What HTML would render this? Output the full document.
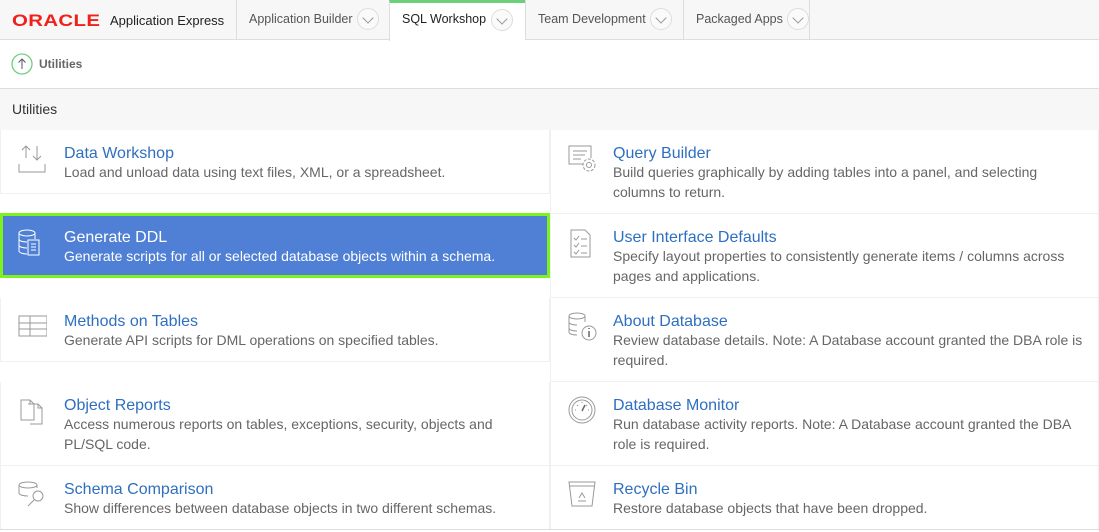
<!DOCTYPE html>
<html><head><meta charset="utf-8"><style>
*{box-sizing:border-box;margin:0;padding:0}
body{width:1099px;height:532px;overflow:hidden;background:#fff;font-family:"Liberation Sans",Arial,sans-serif;position:relative}
.top{position:absolute;left:0;top:0;width:1099px;height:40px;background:#f7f7f7;border-bottom:1px solid #ddd}
.logo{position:absolute;left:12px;top:11px;color:#f0201b;font-weight:bold;font-size:17px;letter-spacing:0.3px;transform:scaleX(1.2);transform-origin:left}
.ae{position:absolute;left:110px;top:13px;font-size:13px;color:#222}
.tab{position:absolute;top:0;height:40px;border-left:1px solid #ddd;font-size:12.5px;color:#555;padding:12px 0 0 12px}
.tab.act{background:#fff;border-top:3px solid #6dcf79;padding-top:9px;color:#222;height:41px}
.chev{position:absolute;top:8px;width:22px;height:22px;border:1px solid #ddd;border-radius:50%;background:#fafafa}
.chev:after{content:"";position:absolute;left:6px;top:5px;width:7px;height:7px;border-right:1px solid #999;border-bottom:1px solid #999;transform:rotate(45deg)}
.bc{position:absolute;top:40px;left:0;width:1099px;height:49px;border-bottom:1px solid #ddd}
.rh{position:absolute;top:89px;left:0;width:1099px;height:41px;background:#f7f7f7;font-size:14px;color:#333;padding:12px 0 0 12px}
.it{position:absolute;border:1px solid #f0f0f0;border-top:none}
.it h{display:block;position:absolute;left:63px;top:15px;font-size:16px;color:#2f6fbf;white-space:nowrap}
.it p{position:absolute;left:63px;top:32px;font-size:14px;line-height:20px;color:#666;width:472px}
.it svg{position:absolute;left:16px;top:14px}
.sel{background:#4f80d5;border:3px solid #7ff21e}
.sel h,.sel p{color:#fff}
.sel h{left:61px;top:13px}.sel p{left:61px;top:30px}.sel svg{left:13px;top:13px}
.r h,.r p{left:62px}
</style></head><body>
<div class="top">
<div class="logo">ORACLE</div><div class="ae">Application Express</div>
<div class="tab" style="left:236px;width:153px">Application Builder<span class="chev" style="left:120px"></span></div>
<div class="tab act" style="left:389px;width:136px">SQL Workshop<span class="chev" style="left:101px;top:6px"></span></div>
<div class="tab" style="left:525px;width:158px">Team Development<span class="chev" style="left:124px"></span></div>
<div class="tab" style="left:683px;width:127px;border-right:1px solid #ddd">Packaged Apps<span class="chev" style="left:103px"></span></div>
</div>
<div class="bc">
<svg style="position:absolute;left:11px;top:13px" width="22" height="22"><circle cx="11" cy="11" r="10" fill="#fff" stroke="#6dcf79" stroke-width="1.3"/><path d="M11 16V6M7.5 9.5L11 6l3.5 3.5" fill="none" stroke="#556" stroke-width="1"/></svg>
<div style="position:absolute;left:39px;top:17px;font-size:12px;font-weight:bold;color:#666">Utilities</div>
</div>
<div class="rh">Utilities</div>

<div class="it" style="left:0;top:130px;width:550px;height:64px"><svg width="30" height="30"><path d="M2 20v8h26v-8M9 14V2M5 6l4-4 4 4M20 2v14M16 12l4 4 4-4" fill="none" stroke="#999" stroke-width="1"/></svg><h>Data Workshop</h><p>Load and unload data using text files, XML, or a spreadsheet.</p></div>
<div class="it sel" style="left:0;top:213px;width:550px;height:65px"><svg width="30" height="30"><ellipse cx="11" cy="4" rx="8" ry="3" fill="none" stroke="#fff"/><path d="M3 4v18c0 2 5 3 8 3M19 4v6M3 10c0 2 4 3 8 3M3 16c0 2 4 3 8 3" fill="none" stroke="#fff"/><rect x="12" y="11" width="11" height="15" fill="#4f80d5" stroke="#fff"/><path d="M15 15h5M15 18h5M15 21h5" stroke="#fff"/></svg><h>Generate DDL</h><p>Generate scripts for all or selected database objects within a schema.</p></div>
<div class="it" style="left:0;top:298px;width:550px;height:64px"><svg width="30" height="30"><rect x="2" y="4" width="28" height="20" fill="none" stroke="#999"/><path d="M2 11h28M2 17h28M13 4v20" stroke="#999"/></svg><h>Methods on Tables</h><p>Generate API scripts for DML operations on specified tables.</p></div>
<div class="it" style="left:0;top:382px;width:550px;height:84px"><svg width="30" height="30"><path d="M4 4h9l4 4v16H4z M13 4v4h4 M11 8h10l4 4v16H13 M21 8v4h4" fill="none" stroke="#999"/></svg><h>Object Reports</h><p>Access numerous reports on tables, exceptions, security, objects and PL/SQL code.</p></div>
<div class="it" style="left:0;top:466px;width:550px;height:64px"><svg width="30" height="30"><ellipse cx="11" cy="5" rx="9" ry="3" fill="none" stroke="#999"/><path d="M2 5v8c0 2 5 3 9 3M20 5v3" fill="none" stroke="#999"/><circle cx="21" cy="16" r="5" fill="#fff" stroke="#999"/><path d="M17 20l-6 6" stroke="#999"/></svg><h>Schema Comparison</h><p>Show differences between database objects in two different schemas.</p></div>

<div class="it r" style="left:550px;top:130px;width:549px;height:84px"><svg width="32" height="32"><path d="M16 20H2V2h22v12" fill="none" stroke="#999"/><path d="M6 7h14M6 11h12M6 15h8" stroke="#999"/><circle cx="22" cy="21" r="6" fill="#fff" stroke="#999" stroke-dasharray="3 1.5"/><circle cx="22" cy="21" r="2.5" fill="none" stroke="#999"/></svg><h>Query Builder</h><p>Build queries graphically by adding tables into a panel, and selecting columns to return.</p></div>
<div class="it r" style="left:550px;top:214px;width:549px;height:84px"><svg width="30" height="30"><path d="M4 2h14l5 5v22H4z" fill="none" stroke="#999"/><path d="M7 10l2 2 3-4M7 17l2 2 3-4M7 24l2 2 3-4M14 11h6M14 18h6M14 25h6" fill="none" stroke="#999"/></svg><h>User Interface Defaults</h><p>Specify layout properties to consistently generate items / columns across pages and applications.</p></div>
<div class="it r" style="left:550px;top:298px;width:549px;height:84px"><svg width="32" height="32"><ellipse cx="10" cy="4" rx="8" ry="3" fill="none" stroke="#999"/><path d="M2 4v16c0 2 4 3 8 3M18 4v6M2 10c0 2 4 3 8 3M2 16c0 2 4 3 8 3" fill="none" stroke="#999"/><circle cx="22" cy="21" r="7" fill="#fff" stroke="#999"/><path d="M22 19v6M22 16v1" stroke="#666" stroke-width="1.5"/></svg><h>About Database</h><p>Review database details. Note: A Database account granted the DBA role is required.</p></div>
<div class="it r" style="left:550px;top:382px;width:549px;height:84px"><svg width="32" height="32"><circle cx="15" cy="14" r="13" fill="none" stroke="#999"/><circle cx="15" cy="14" r="10" fill="none" stroke="#999"/><path d="M15 15l3-6" stroke="#666" stroke-width="1.5"/><path d="M15 6v1M8 14h1M21 14h1M10 9l1 1M20 9l-1 1" stroke="#999"/></svg><h>Database Monitor</h><p>Run database activity reports. Note: A Database account granted the DBA role is required.</p></div>
<div class="it r" style="left:550px;top:466px;width:549px;height:64px"><svg width="30" height="30"><path d="M2 2h26l-3 24H5z M2 6h26" fill="none" stroke="#999"/><path d="M12 18l3-5 3 5M11 21h8" fill="none" stroke="#999"/></svg><h>Recycle Bin</h><p>Restore database objects that have been dropped.</p></div>
<div style="position:absolute;left:0;top:529px;width:1099px;height:3px;border-top:1px solid #ddd"></div>
</body></html>
